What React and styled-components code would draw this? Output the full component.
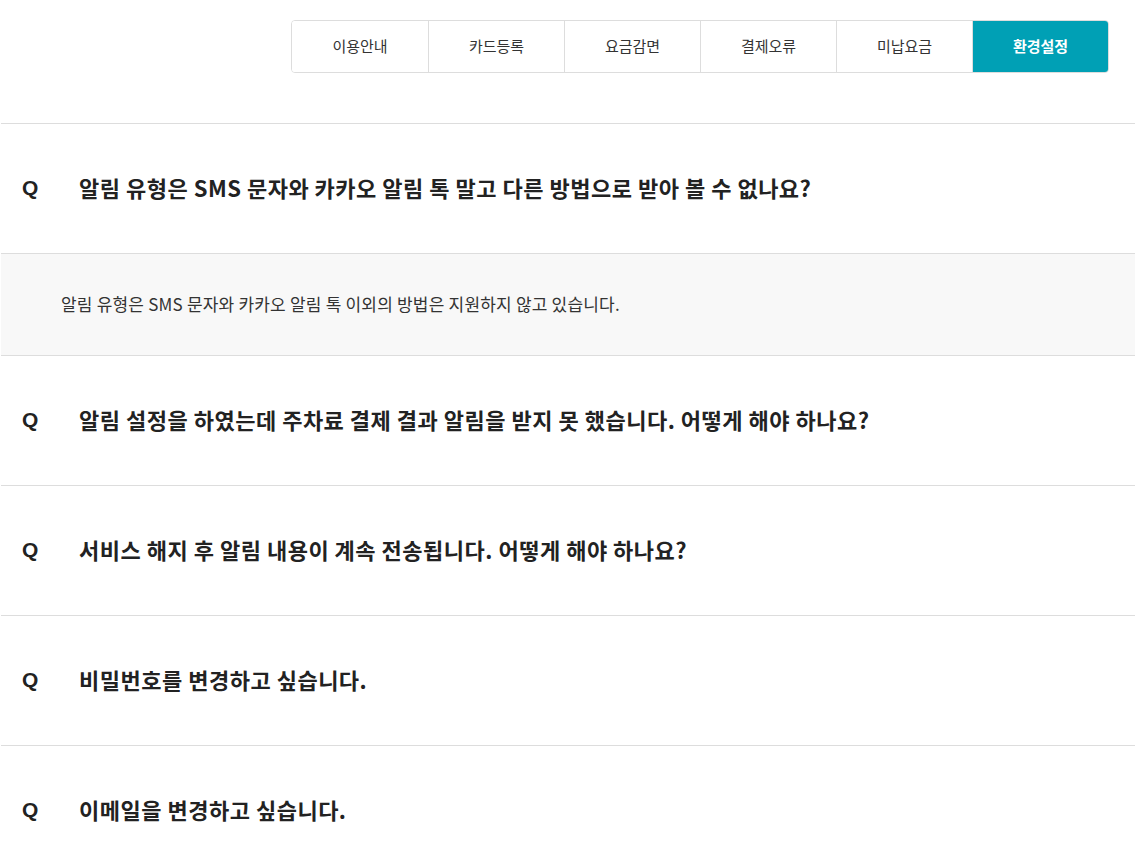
import React from "react";
import styled, { createGlobalStyle } from "styled-components";

const GlobalStyle = createGlobalStyle`
  html, body {
    margin: 0;
    padding: 0;
    background: #fff;
  }
  body {
    font-family: "Noto Sans CJK KR", "Noto Sans", sans-serif;
    color: #222;
  }
`;

const tabs = ["이용안내", "카드등록", "요금감면", "결제오류", "미납요금", "환경설정"];

const faqs = [
  {
    q: "알림 유형은 SMS 문자와 카카오 알림 톡 말고 다른 방법으로 받아 볼 수 없나요?",
    a: "알림 유형은 SMS 문자와 카카오 알림 톡 이외의 방법은 지원하지 않고 있습니다.",
    open: true,
  },
  { q: "알림 설정을 하였는데 주차료 결제 결과 알림을 받지 못 했습니다. 어떻게 해야 하나요?" },
  { q: "서비스 해지 후 알림 내용이 계속 전송됩니다. 어떻게 해야 하나요?" },
  { q: "비밀번호를 변경하고 싶습니다." },
  { q: "이메일을 변경하고 싶습니다." },
];

const App = () => {
  return (
    <Page>
      <GlobalStyle />
      <TabBar>
        <Tabs>
          {tabs.map((t, i) => (
            <Tab key={t} active={i === tabs.length - 1}>
              {t}
            </Tab>
          ))}
        </Tabs>
      </TabBar>
      <FaqList>
        {faqs.map((item) => (
          <FaqItem key={item.q}>
            <Question>
              <QMark>Q</QMark>
              <QText>{item.q}</QText>
            </Question>
            {item.open && <Answer>{item.a}</Answer>}
          </FaqItem>
        ))}
      </FaqList>
    </Page>
  );
};

const Page = styled.div`
  width: 100%;
  overflow: hidden;
`;

const TabBar = styled.div`
  display: flex;
  justify-content: flex-end;
  padding: 20px 26px 0 0;
`;

const Tabs = styled.ul`
  display: grid;
  grid-template-columns: repeat(6, 1fr);
  width: 818px;
  height: 53px;
  margin: 0;
  padding: 0;
  list-style: none;
  border: 1px solid #ddd;
  border-radius: 4px;
  box-sizing: border-box;
  overflow: hidden;
`;

const Tab = styled.li`
  display: flex;
  align-items: center;
  justify-content: center;
  padding-bottom: 2px;
  font-size: 15px;
  font-weight: ${(p) => (p.active ? 700 : 400)};
  color: ${(p) => (p.active ? "#fff" : "#333")};
  background: ${(p) => (p.active ? "#00a0b5" : "#fff")};
  border-left: 1px solid #ddd;
  margin-top: ${(p) => (p.active ? "-1px" : "0")};
  margin-bottom: ${(p) => (p.active ? "-1px" : "0")};
  &:first-child {
    border-left: none;
  }
`;

const FaqList = styled.div`
  margin: 50px 0 0 1px;
`;

const FaqItem = styled.div`
  border-top: 1px solid #ddd;
`;

const Question = styled.div`
  display: flex;
  align-items: center;
  box-sizing: border-box;
  height: 129px;
  padding: 0 0 4px 21px;
`;

const QMark = styled.span`
  width: 57px;
  padding-top: 2px;
  font-family: "Liberation Sans", Arial, sans-serif;
  font-size: 21px;
  font-weight: 700;
  color: #222;
`;

const QText = styled.span`
  font-size: 22px;
  font-weight: 700;
  color: #222;
  letter-spacing: 0.5px;
`;

const Answer = styled.div`
  display: flex;
  align-items: center;
  box-sizing: border-box;
  height: 102px;
  padding: 0 0 2px 60px;
  border-top: 1px solid #ddd;
  background: #f8f8f8;
  font-size: 17px;
  color: #333;
  letter-spacing: 0.2px;
`;

export default App;
